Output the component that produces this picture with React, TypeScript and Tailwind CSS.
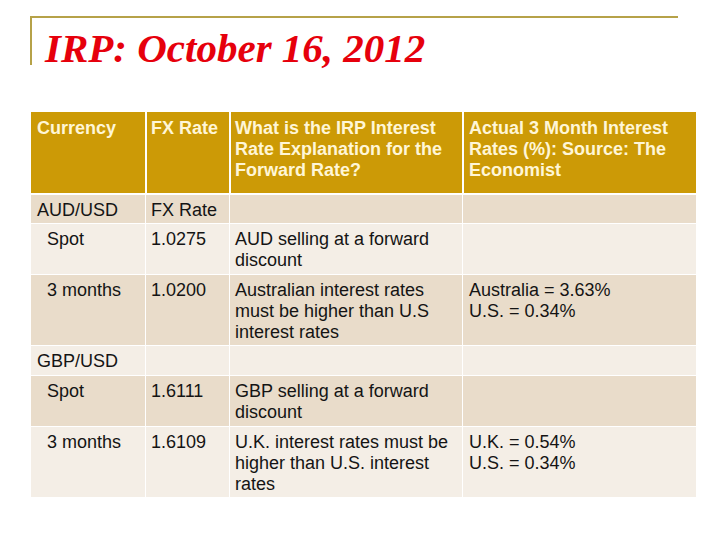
import React from "react";

type Row = {
  cells: [string, string, string, string];
  h: string;
  dark: boolean;
  indent: boolean;
  last?: boolean;
};

const rows: Row[] = [
  { cells: ["AUD/USD", "FX Rate", "", ""], h: "h-[29px]", dark: true, indent: false },
  { cells: ["Spot", "1.0275", "AUD selling at a forward discount", ""], h: "h-[51px]", dark: false, indent: true },
  { cells: ["3 months", "1.0200", "Australian interest rates must be higher than U.S interest rates", "Australia = 3.63%\nU.S. = 0.34%"], h: "h-[71px]", dark: true, indent: true },
  { cells: ["GBP/USD", "", "", ""], h: "h-[30px]", dark: false, indent: false },
  { cells: ["Spot", "1.6111", "GBP selling at a forward discount", ""], h: "h-[51px]", dark: true, indent: true },
  { cells: ["3 months", "1.6109", "U.K. interest rates must be higher than U.S. interest rates", "U.K. = 0.54%\nU.S. = 0.34%"], h: "h-[70px]", dark: false, indent: true, last: true },
];

export default function App() {
  return (
    <div className="w-[720px] h-[540px] bg-white overflow-hidden" style={{ fontFamily: '"Liberation Sans", Arial, sans-serif' }}>
      <div className="pt-[16px] pl-[30px]">
        <div className="w-[648px] h-[49px] border-t-2 border-l-2 border-[#b6a248] pl-[13px] pt-[10px]">
          <div
            className="text-[41px] leading-[41px] font-bold italic text-[#e6000c] whitespace-nowrap"
            style={{ fontFamily: '"Liberation Serif", "Times New Roman", serif' }}
          >
            IRP: October 16, 2012
          </div>
        </div>
      </div>

      <div className="ml-[31px] mt-[47px] w-[665px] text-[18px] leading-[21px]">
        <div className="grid grid-cols-[114px_84px_233px_234px] h-[83px] bg-[#cc9a06] border-b-2 border-white font-bold text-[#fff6d6]">
          <div className="pl-[6px] pt-[6px]">Currency</div>
          <div className="pl-[4px] pt-[6px] border-l-2 border-white">FX Rate</div>
          <div className="pl-[4px] pt-[6px] border-l-2 border-white">What is the IRP Interest Rate Explanation for the Forward Rate?</div>
          <div className="pl-[5px] pt-[6px] pr-[10px] border-l-2 border-white">Actual 3 Month Interest Rates (%): Source: The Economist</div>
        </div>
        {rows.map((r, i) => (
          <div
            key={i}
            className={`grid grid-cols-[114px_84px_233px_234px] ${r.h} ${r.dark ? "bg-[#e9dcca]" : "bg-[#f4eee6]"} ${r.last ? "" : "border-b border-white"} text-[#141414]`}
          >
            <div className={`${r.indent ? "pl-[16px]" : "pl-[6px]"} pt-[5px]`}>{r.cells[0]}</div>
            <div className="pl-[5px] pt-[5px] border-l border-white">{r.cells[1]}</div>
            <div className="pl-[5px] pt-[5px] pr-[6px] border-l border-white">{r.cells[2]}</div>
            <div className="pl-[6px] pt-[5px] border-l border-white whitespace-pre-line">{r.cells[3]}</div>
          </div>
        ))}
      </div>
    </div>
  );
}
